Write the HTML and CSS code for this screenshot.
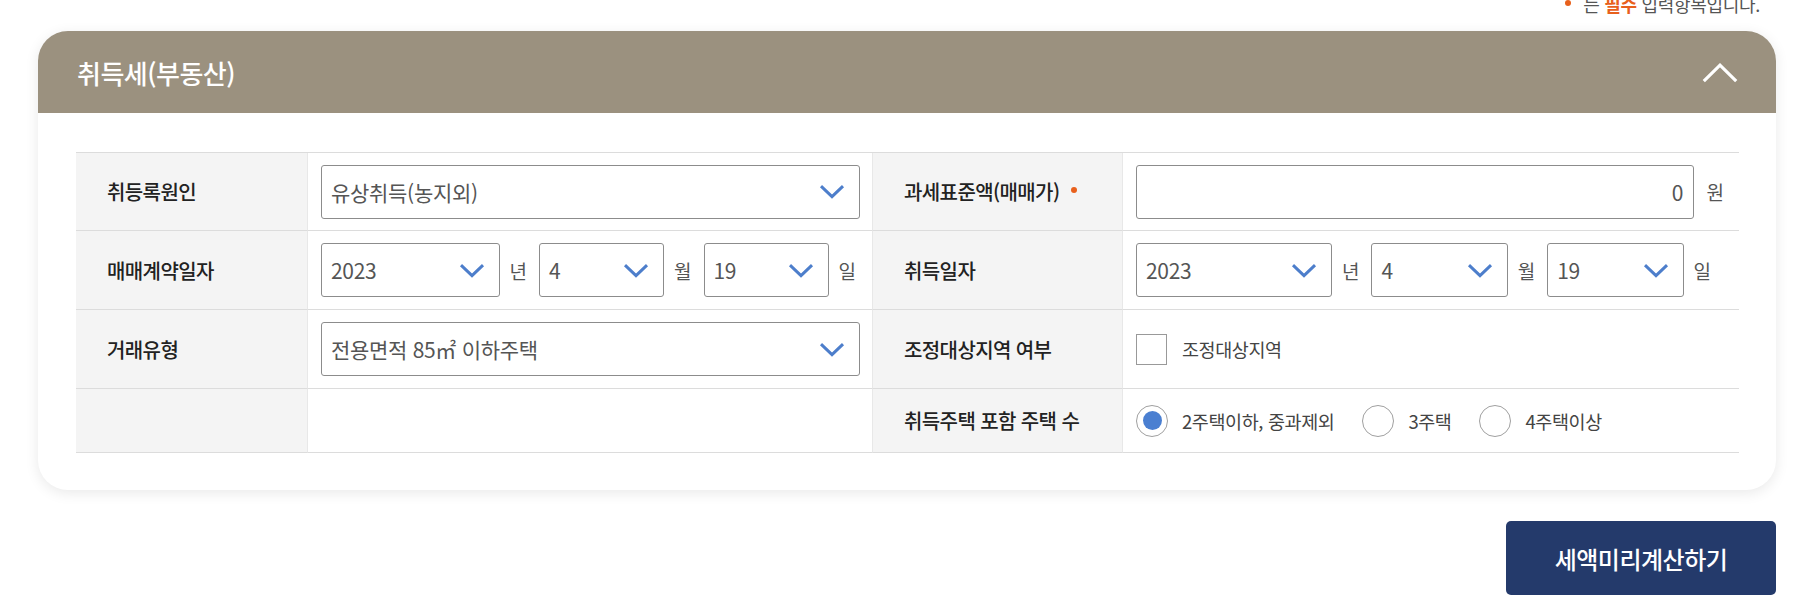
FILE: index.html
```html
<!DOCTYPE html>
<html lang="ko">
<head>
<meta charset="utf-8">
<title>취득세(부동산)</title>
<link rel="stylesheet" href="styles.css">
</head>
<body>
<div class="page">
  <p class="notice"><span class="req-dot"></span>는 <strong>필수</strong> 입력항목입니다.</p>

  <section class="card">
    <header class="card-head">
      <h2 class="card-title">취득세(부동산)</h2>
      <svg class="head-chevron" width="36" height="20" viewBox="0 0 36 20"><polyline points="1.8,18.2 18,2.2 34.2,18.2" fill="none" stroke="#fff" stroke-width="3.2"/></svg>
    </header>

    <div class="card-body">
      <div class="grid">
        <!-- row 1 -->
        <div class="cell label">취등록원인</div>
        <div class="cell field fcol1">
          <div class="select full"><span class="sel-text">유상취득(농지외)</span><svg class="chev" width="26" height="15" viewBox="0 0 26 15"><polyline points="2,2.2 13,12.6 24,2.2" fill="none" stroke="#4d7ecb" stroke-width="3"/></svg></div>
        </div>
        <div class="cell label">과세표준액(매매가)<span class="req"></span></div>
        <div class="cell field fcol2">
          <div class="with-unit"><div class="input">0</div><span class="unit">원</span></div>
        </div>

        <!-- row 2 -->
        <div class="cell label">매매계약일자</div>
        <div class="cell field fcol1">
          <div class="date-row">
            <div class="select year"><span class="sel-text">2023</span><svg class="chev" width="26" height="15" viewBox="0 0 26 15"><polyline points="2,2.2 13,12.6 24,2.2" fill="none" stroke="#4d7ecb" stroke-width="3"/></svg></div>
            <span class="unit">년</span>
            <div class="select part"><span class="sel-text">4</span><svg class="chev" width="26" height="15" viewBox="0 0 26 15"><polyline points="2,2.2 13,12.6 24,2.2" fill="none" stroke="#4d7ecb" stroke-width="3"/></svg></div>
            <span class="unit">월</span>
            <div class="select part"><span class="sel-text">19</span><svg class="chev" width="26" height="15" viewBox="0 0 26 15"><polyline points="2,2.2 13,12.6 24,2.2" fill="none" stroke="#4d7ecb" stroke-width="3"/></svg></div>
            <span class="unit last">일</span>
          </div>
        </div>
        <div class="cell label">취득일자</div>
        <div class="cell field fcol2">
          <div class="date-row right">
            <div class="select year"><span class="sel-text">2023</span><svg class="chev" width="26" height="15" viewBox="0 0 26 15"><polyline points="2,2.2 13,12.6 24,2.2" fill="none" stroke="#4d7ecb" stroke-width="3"/></svg></div>
            <span class="unit">년</span>
            <div class="select part"><span class="sel-text">4</span><svg class="chev" width="26" height="15" viewBox="0 0 26 15"><polyline points="2,2.2 13,12.6 24,2.2" fill="none" stroke="#4d7ecb" stroke-width="3"/></svg></div>
            <span class="unit">월</span>
            <div class="select part"><span class="sel-text">19</span><svg class="chev" width="26" height="15" viewBox="0 0 26 15"><polyline points="2,2.2 13,12.6 24,2.2" fill="none" stroke="#4d7ecb" stroke-width="3"/></svg></div>
            <span class="unit last">일</span>
          </div>
        </div>

        <!-- row 3 -->
        <div class="cell label">거래유형</div>
        <div class="cell field fcol1">
          <div class="select full"><span class="sel-text">전용면적 85㎡ 이하주택</span><svg class="chev" width="26" height="15" viewBox="0 0 26 15"><polyline points="2,2.2 13,12.6 24,2.2" fill="none" stroke="#4d7ecb" stroke-width="3"/></svg></div>
        </div>
        <div class="cell label">조정대상지역 여부</div>
        <div class="cell field fcol2">
          <label class="check"><span class="box"></span><span class="opt-text">조정대상지역</span></label>
        </div>

        <!-- row 4 -->
        <div class="cell label"></div>
        <div class="cell field fcol1"></div>
        <div class="cell label">취득주택 포함 주택 수</div>
        <div class="cell field fcol2">
          <div class="radios">
            <label class="radio checked"><span class="ring"></span><span class="opt-text">2주택이하, 중과제외</span></label>
            <label class="radio"><span class="ring"></span><span class="opt-text">3주택</span></label>
            <label class="radio"><span class="ring"></span><span class="opt-text">4주택이상</span></label>
          </div>
        </div>
      </div>
    </div>
  </section>

  <div class="actions">
    <button class="calc-btn" type="button">세액미리계산하기</button>
  </div>
</div>
</body>
</html>
```

FILE: styles.css
```css
* { box-sizing: border-box; }

html, body {
  margin: 0;
  padding: 0;
  background: #fff;
}

body {
  font-family: "Noto Sans CJK KR", "Noto Sans", "Liberation Sans", sans-serif;
  color: #222;
  overflow: hidden;
}

.page {
  width: 1776px;
  padding-left: 38px;
}

.notice {
  margin: -6px 0 0 0;
  padding-right: 16px;
  height: 20px;
  line-height: 20px;
  font-size: 18px;
  letter-spacing: -0.3px;
  text-align: right;
  color: #555;
}

.req-dot {
  display: inline-block;
  width: 6px;
  height: 6px;
  border-radius: 50%;
  background: #e8601c;
  margin-right: 12px;
  vertical-align: 6px;
}

.notice strong {
  color: #e8601c;
  font-weight: 700;
}

.card {
  margin-top: 17px;
  background: #fff;
  border-radius: 30px;
  box-shadow: 0 3px 14px rgba(0, 0, 0, 0.09);
}

.card-head {
  height: 82px;
  background: #9b917f;
  border-radius: 30px 30px 0 0;
  display: flex;
  align-items: center;
  justify-content: space-between;
  padding: 0 38px 0 39px;
}

.card-title {
  margin: 0;
  font-size: 26px;
  font-weight: 500;
  color: #fff;
  letter-spacing: -0.5px;
}

.head-chevron {
  display: block;
  margin-top: 1px;
}

.card-body {
  padding: 39px 37px 37px 38px;
}

.grid {
  display: grid;
  grid-template-columns: 232px 565px 250px 1fr;
  grid-template-rows: 78px 79px 79px 64px;
  border-top: 1px solid #dcdcdc;
}

.cell {
  border-bottom: 1px solid #dcdcdc;
  display: flex;
  align-items: center;
}

.label {
  background: #f4f4f4;
  padding-left: 31px;
  font-size: 20px;
  font-weight: 500;
  color: #222;
  letter-spacing: -0.6px;
  border-right: 1px solid #e8e8e8;
  white-space: nowrap;
}

.req {
  display: inline-block;
  width: 6px;
  height: 6px;
  border-radius: 50%;
  background: #e8601c;
  margin-left: 12px;
  margin-bottom: 4px;
}

.field {
  padding: 0 12px 0 13px;
}

.fcol1 {
  border-right: 1px solid #e8e8e8;
}

.fcol2 {
  padding-right: 15px;
}

.select {
  height: 54px;
  border: 1px solid #8c8c8c;
  border-radius: 3px;
  background: #fff;
  display: flex;
  align-items: center;
  justify-content: space-between;
  padding: 0 14px 0 9px;
  font-size: 21px;
  color: #555;
  font-weight: 400;
}

.select.full {
  width: 100%;
}

.sel-text {
  white-space: nowrap;
  letter-spacing: -0.3px;
}

.chev {
  display: block;
  flex: none;
}

.date-row {
  width: 100%;
  display: flex;
  align-items: center;
  padding-right: 4px;
}

.date-row.right {
  padding-right: 13px;
}

.select.year {
  flex: 152 1 0;
  min-width: 0;
}

.select.part {
  flex: 99 1 0;
  min-width: 0;
}

.unit {
  flex: none;
  font-size: 19px;
  color: #555;
  margin: 0 12px 0 10px;
}

.unit.last {
  margin-right: 0;
}

.with-unit {
  width: 100%;
  display: flex;
  align-items: center;
}

.input {
  flex: 1;
  height: 54px;
  border: 1px solid #8c8c8c;
  border-radius: 3px;
  display: flex;
  align-items: center;
  justify-content: flex-end;
  padding-right: 9px;
  font-size: 21px;
  color: #555;
}

.with-unit .unit {
  margin: 0 0 0 13px;
}

.check {
  display: flex;
  align-items: center;
}

.box {
  width: 31px;
  height: 31px;
  border: 1px solid #999;
  background: #fff;
  margin-right: 15px;
}

.opt-text {
  font-size: 18.5px;
  color: #444;
  letter-spacing: -0.4px;
  white-space: nowrap;
}

.radios {
  display: flex;
  align-items: center;
}

.radio {
  display: flex;
  align-items: center;
  margin-right: 28px;
}

.ring {
  width: 32px;
  height: 32px;
  border: 1px solid #a0a0a0;
  border-radius: 50%;
  background: #fff;
  margin-right: 14px;
  display: flex;
  align-items: center;
  justify-content: center;
}

.radio.checked .ring::after {
  content: "";
  width: 19px;
  height: 19px;
  border-radius: 50%;
  background: #4a7fd1;
}

.actions {
  display: flex;
  justify-content: flex-end;
  margin-top: 31px;
}

.calc-btn {
  width: 270px;
  height: 74px;
  border: 0;
  border-radius: 5px;
  background: #243a6b;
  color: #fff;
  font-family: inherit;
  font-size: 24px;
  font-weight: 500;
  letter-spacing: -0.5px;
}
```
